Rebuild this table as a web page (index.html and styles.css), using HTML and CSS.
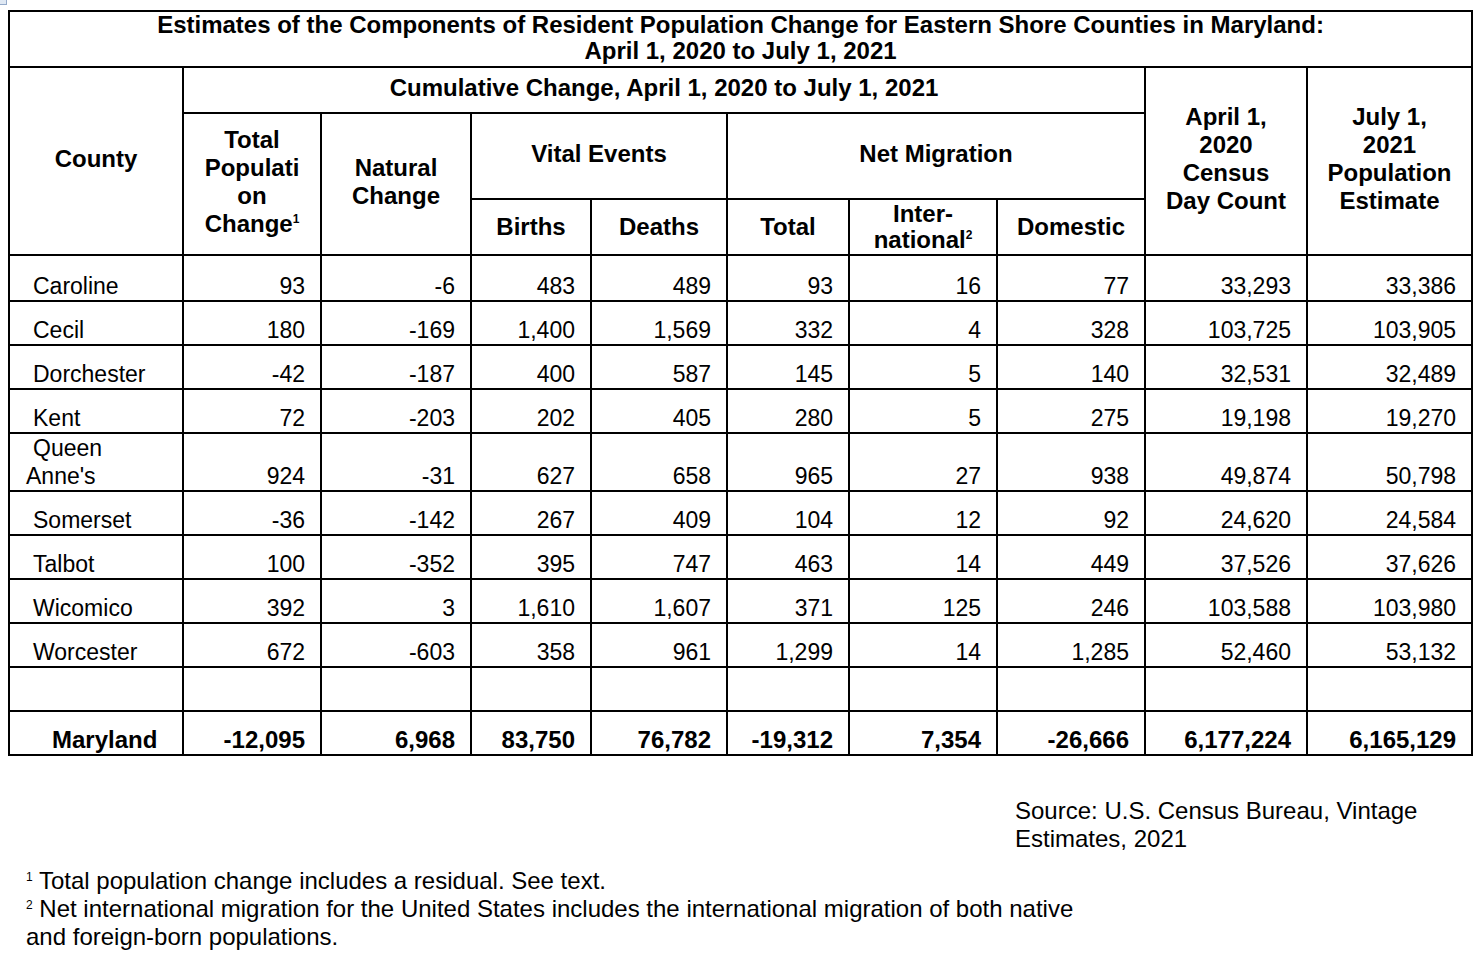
FILE: index.html
```html
<!DOCTYPE html>
<html lang="en">
<head>
<meta charset="utf-8">
<title>Estimates of the Components of Resident Population Change</title>
<link rel="stylesheet" href="styles.css">
</head>
<body>
<div class="page">
  <span class="corner"></span>
  <table class="est">
    <colgroup>
      <col class="c-county"><col class="c-tpc"><col class="c-nat"><col class="c-births"><col class="c-deaths">
      <col class="c-total"><col class="c-intl"><col class="c-dom"><col class="c-apr"><col class="c-jul">
    </colgroup>
    <thead>
      <tr class="r-title">
        <th colspan="10" class="title">Estimates of the Components of Resident Population Change for Eastern Shore Counties in Maryland:<br>April 1, 2020 to July 1, 2021</th>
      </tr>
      <tr class="r-cum">
        <th rowspan="3">County</th>
        <th colspan="7">Cumulative Change, April 1, 2020 to July 1, 2021</th>
        <th rowspan="3">April 1,<br>2020<br>Census<br>Day Count</th>
        <th rowspan="3">July 1,<br>2021<br>Population<br>Estimate</th>
      </tr>
      <tr class="r-grp">
        <th rowspan="2">Total<br>Populati<br>on<br>Change<sup class="hmark">1</sup></th>
        <th rowspan="2">Natural<br>Change</th>
        <th colspan="2">Vital Events</th>
        <th colspan="3">Net Migration</th>
      </tr>
      <tr class="r-sub">
        <th>Births</th>
        <th>Deaths</th>
        <th>Total</th>
        <th>Inter-<br>national<sup class="hmark">2</sup></th>
        <th>Domestic</th>
      </tr>
    </thead>
    <tbody>
      <tr class="r-first"><td class="name">Caroline</td><td>93</td><td>-6</td><td>483</td><td>489</td><td>93</td><td>16</td><td>77</td><td>33,293</td><td>33,386</td></tr>
      <tr class="r-data"><td class="name">Cecil</td><td>180</td><td>-169</td><td>1,400</td><td>1,569</td><td>332</td><td>4</td><td>328</td><td>103,725</td><td>103,905</td></tr>
      <tr class="r-data"><td class="name">Dorchester</td><td>-42</td><td>-187</td><td>400</td><td>587</td><td>145</td><td>5</td><td>140</td><td>32,531</td><td>32,489</td></tr>
      <tr class="r-data"><td class="name">Kent</td><td>72</td><td>-203</td><td>202</td><td>405</td><td>280</td><td>5</td><td>275</td><td>19,198</td><td>19,270</td></tr>
      <tr class="r-tall"><td class="name">Queen<br>Anne's</td><td>924</td><td>-31</td><td>627</td><td>658</td><td>965</td><td>27</td><td>938</td><td>49,874</td><td>50,798</td></tr>
      <tr class="r-data"><td class="name">Somerset</td><td>-36</td><td>-142</td><td>267</td><td>409</td><td>104</td><td>12</td><td>92</td><td>24,620</td><td>24,584</td></tr>
      <tr class="r-data"><td class="name">Talbot</td><td>100</td><td>-352</td><td>395</td><td>747</td><td>463</td><td>14</td><td>449</td><td>37,526</td><td>37,626</td></tr>
      <tr class="r-data"><td class="name">Wicomico</td><td>392</td><td>3</td><td>1,610</td><td>1,607</td><td>371</td><td>125</td><td>246</td><td>103,588</td><td>103,980</td></tr>
      <tr class="r-data"><td class="name">Worcester</td><td>672</td><td>-603</td><td>358</td><td>961</td><td>1,299</td><td>14</td><td>1,285</td><td>52,460</td><td>53,132</td></tr>
      <tr class="r-data"><td class="name"></td><td></td><td></td><td></td><td></td><td></td><td></td><td></td><td></td><td></td></tr>
      <tr class="r-data r-total"><td class="name-total">Maryland</td><td>-12,095</td><td>6,968</td><td>83,750</td><td>76,782</td><td>-19,312</td><td>7,354</td><td>-26,666</td><td>6,177,224</td><td>6,165,129</td></tr>
    </tbody>
  </table>

  <p class="source">Source: U.S. Census Bureau, Vintage<br>Estimates, 2021</p>

  <div class="footnotes">
    <p class="fn"><sup class="fmark">1</sup> Total population change includes a residual. See text.</p>
    <p class="fn"><sup class="fmark">2</sup> Net international migration for the United States includes the international migration of both native<br>and foreign-born populations.</p>
  </div>
</div>
</body>
</html>
```

FILE: styles.css
```css
html, body {
  margin: 0;
  padding: 0;
  background: #ffffff;
}

body {
  font-family: "Liberation Sans", Arial, Helvetica, sans-serif;
  color: #000000;
}

.page {
  position: relative;
  padding: 10px 0 0 8px;
}

.corner {
  position: absolute;
  left: 0;
  top: 0;
  width: 6px;
  height: 4px;
  background: #dfe8f3;
  border-right: 1px solid #93a9c9;
  border-bottom: 1px solid #93a9c9;
}

.est {
  table-layout: fixed;
  width: 1465px;
  border-collapse: separate;
  border-spacing: 0;
  border-top: 2px solid #000;
  border-left: 2px solid #000;
}

.c-county { width: 174px; }
.c-tpc    { width: 138px; }
.c-nat    { width: 150px; }
.c-births { width: 120px; }
.c-deaths { width: 136px; }
.c-total  { width: 122px; }
.c-intl   { width: 148px; }
.c-dom    { width: 148px; }
.c-apr    { width: 162px; }
.c-jul    { width: 165px; }

.est th,
.est td {
  border-right: 2px solid #000;
  border-bottom: 2px solid #000;
  box-sizing: border-box;
}

.est th {
  font-weight: bold;
  font-size: 24px;
  line-height: 28px;
  text-align: center;
  vertical-align: middle;
  padding: 0 0 5px 0;
  overflow: visible;
}

.est th.title {
  line-height: 26px;
  vertical-align: top;
  padding: 0;
}

.est .r-sub th {
  padding: 0 0 1px 0;
  line-height: 26px;
}

.r-title { height: 56px; }
.r-cum   { height: 46px; }
.r-grp   { height: 86px; }
.r-sub   { height: 56px; }
.r-first { height: 46px; }
.r-data  { height: 44px; }
.r-tall  { height: 58px; }

.hmark {
  font-size: 12px;
  line-height: 0;
  vertical-align: 9px;
}

.est td {
  font-size: 23px;
  line-height: 28px;
  text-align: right;
  vertical-align: bottom;
  padding: 0 15px 0 0;
  white-space: nowrap;
}

.est td.name {
  text-align: left;
  padding: 0 0 0 16px;
  text-indent: 7px;
}

.r-total td {
  font-weight: bold;
  font-size: 24px;
}

.est td.name-total {
  text-align: left;
  padding: 0 0 0 42px;
}

.source {
  margin: 41px 0 0 1007px;
  font-size: 24px;
  line-height: 28px;
}

.footnotes {
  margin: 14px 0 0 18px;
}

.fn {
  margin: 0;
  font-size: 24px;
  line-height: 28px;
  white-space: nowrap;
}

.fmark {
  font-size: 12px;
  line-height: 0;
  vertical-align: 8px;
}
```
